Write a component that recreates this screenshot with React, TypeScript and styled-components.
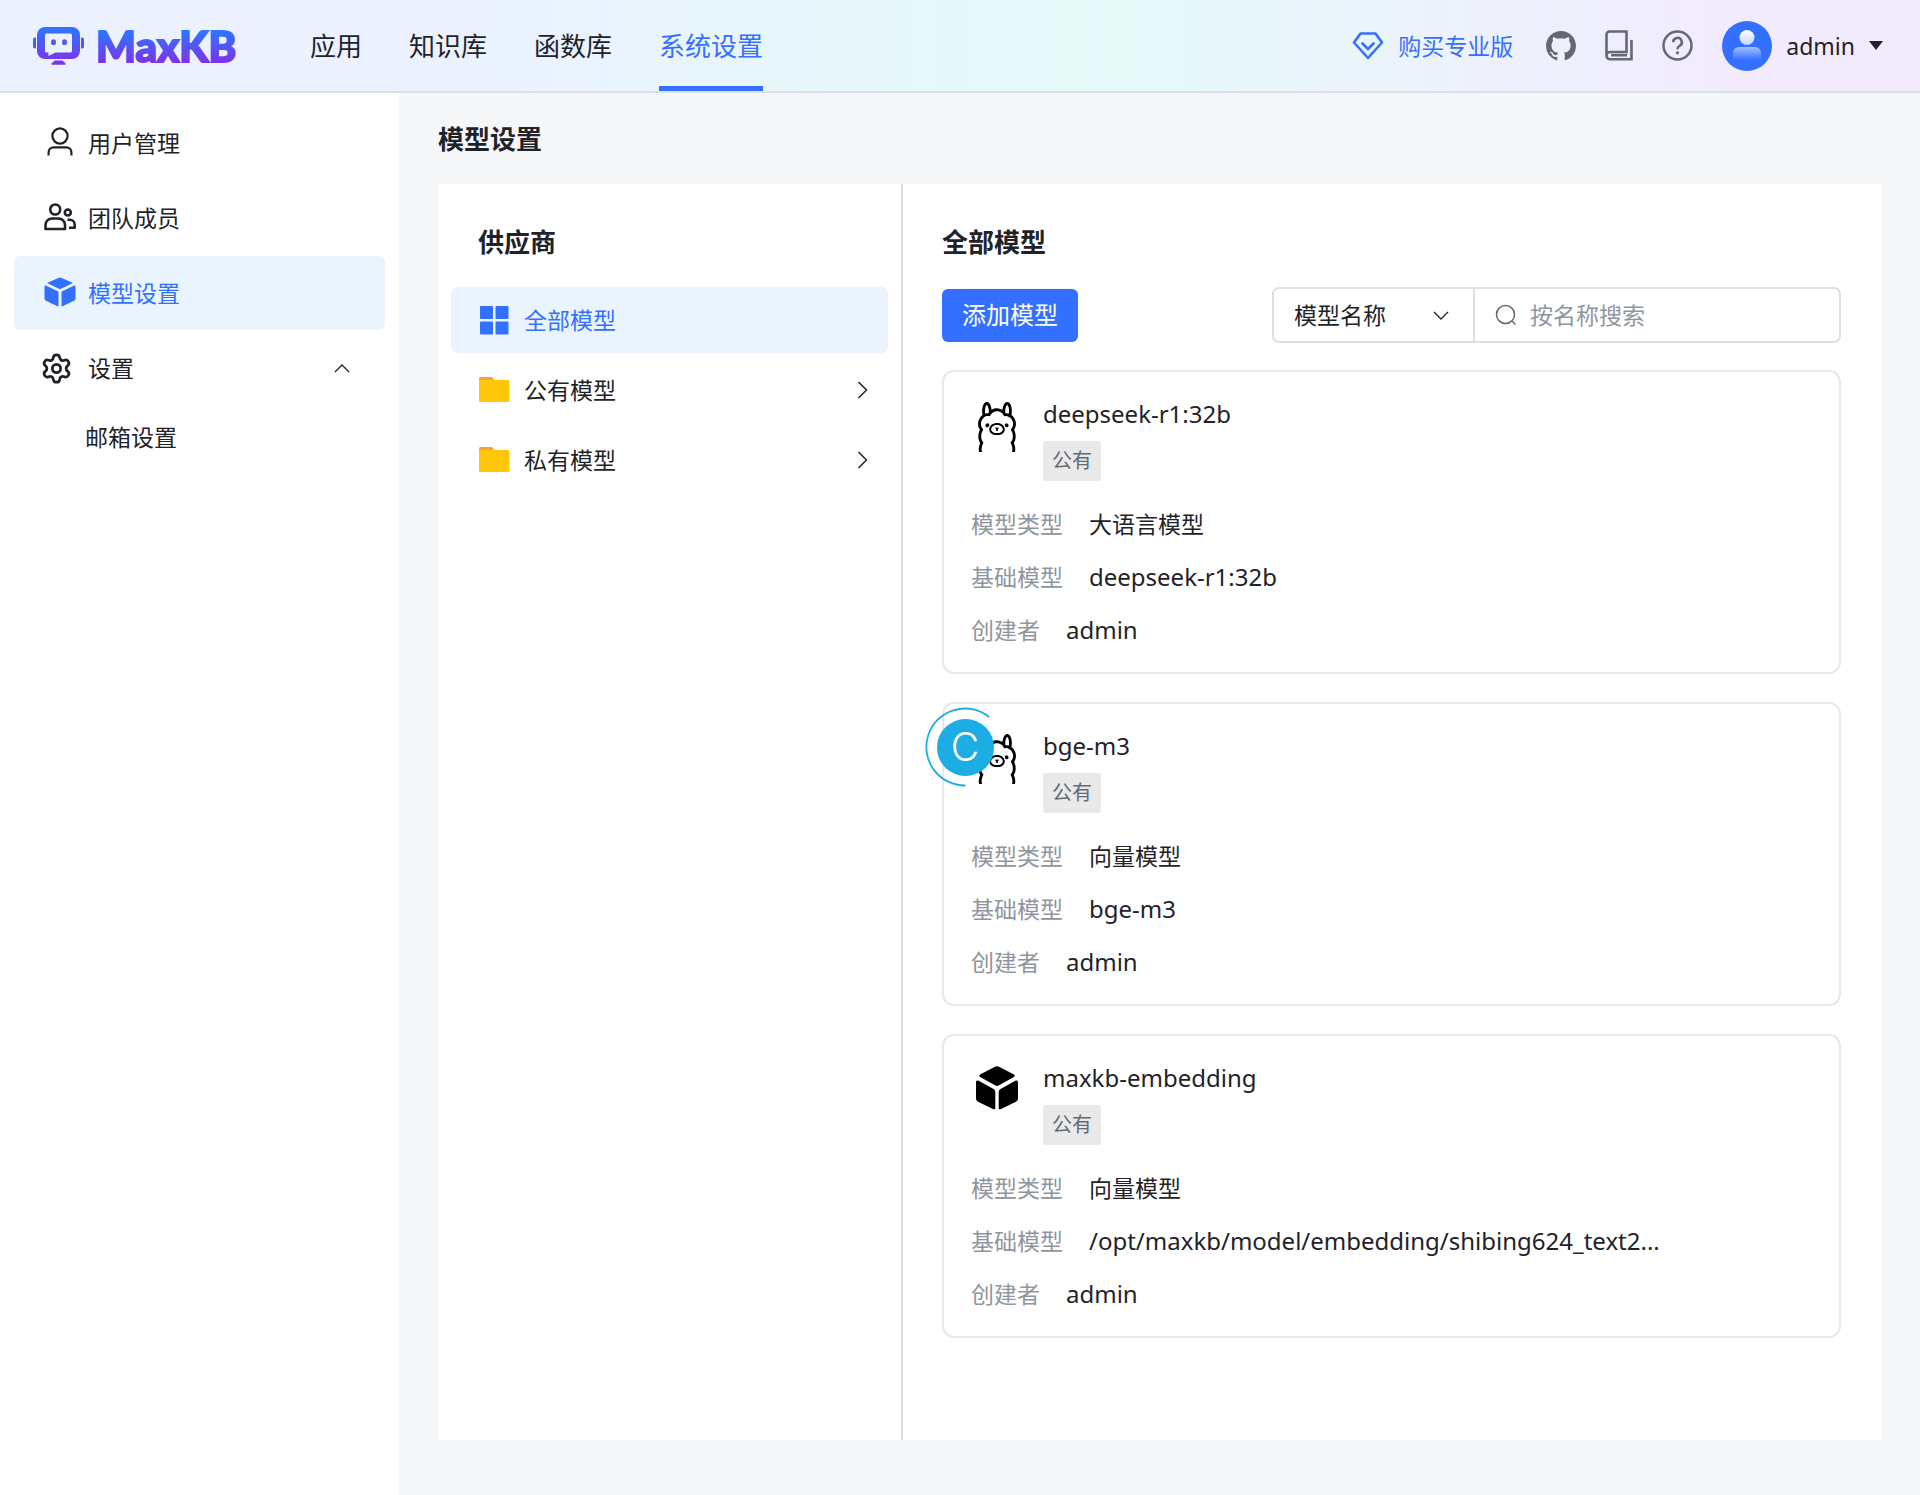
import React from 'react';
import styled, { createGlobalStyle, css } from 'styled-components';
import { Settings } from 'lucide-react';
import { SiOllama } from 'react-icons/si';

const color = {
  primary: '#3370ff',
  text: '#1f2329',
  muted: '#8f959e',
  icon: '#646a73',
  line: '#dcdfe3',
  page: '#f4f6f8',
  active: '#eaf4ff',
};

const GlobalStyle = createGlobalStyle`
  *, *::before, *::after { box-sizing: border-box; }
  body {
    margin: 0;
    background: ${color.page};
    color: ${color.text};
    font-family: 'Noto Sans', 'Noto Sans CJK SC', sans-serif;
    font-size: 23px;
    line-height: 32px;
  }
  a { color: inherit; text-decoration: none; }
  h1, h2, h3, p, ul, dl, dd { margin: 0; padding: 0; }
  ul { list-style: none; }
  button, input, select { font: inherit; color: inherit; }
  svg { display: block; flex: none; }
`;

const Page = styled.div`
  position: relative;
  min-height: 100vh;
  display: flex;
  flex-direction: column;
`;

const Header = styled.header`
  display: flex;
  align-items: stretch;
  height: 93px;
  padding: 0 37px 0 33px;
  border-bottom: 2px solid #dbdfe9;
  background: linear-gradient(90deg, #ebf1ff 24%, #e5fbf8 56%, #f2ebfe 90%);
`;

const Brand = styled.a`
  display: flex;
  align-items: center;
  gap: 12px;
  width: 277px;
`;

const BrandName = styled.span`
  font-family: Lato, sans-serif;
  font-weight: 900;
  font-size: 42px;
  line-height: 48px;
  background: linear-gradient(180deg, #2f74ff 20%, #7a35ea 82%);
  background-clip: text;
  -webkit-background-clip: text;
  -webkit-text-stroke: 2px transparent;
  color: transparent;
`;

const TopNav = styled.nav`
  display: flex;
  gap: 47px;
  flex: 1;
`;

const TopLink = styled.a<{ $active?: boolean }>`
  display: flex;
  align-items: center;
  font-size: 26px;
  border-top: 5px solid transparent;
  border-bottom: 5px solid ${(p) => (p.$active ? color.primary : 'transparent')};
  color: ${(p) => (p.$active ? color.primary : color.text)};
`;

const HeaderTools = styled.div`
  display: flex;
  align-items: center;
  gap: 29px;
  color: ${color.icon};
`;

const BuyLink = styled.a`
  display: flex;
  align-items: center;
  gap: 14px;
  margin-right: 4px;
  color: ${color.primary};
`;

const IconButton = styled.button`
  display: flex;
  padding: 0;
  border: 0;
  background: none;
  color: inherit;
`;

const UserButton = styled(IconButton)`
  align-items: center;
  gap: 14px;
  color: ${color.text};
`;

const Body = styled.div`
  flex: 1;
  display: flex;
`;

const Sidebar = styled.aside`
  flex: none;
  width: 399px;
  padding: 13px 14px;
  background: #fff;
`;

const SideList = styled.ul`
  display: flex;
  flex-direction: column;
  gap: 1px;
`;

const SideLink = styled.a<{ $active?: boolean }>`
  display: flex;
  align-items: center;
  height: 74px;
  padding: 0 35px 0 26px;
  border-radius: 6px;
  background: ${(p) => (p.$active ? color.active : 'transparent')};
  color: ${(p) => (p.$active ? color.primary : color.text)};
`;

const SideIcon = styled.span<{ $start?: boolean }>`
  display: flex;
  justify-content: ${(p) => (p.$start ? 'flex-start' : 'center')};
  width: 40px;
  margin-right: 8px;
`;

const SideText = styled.span`
  flex: 1;
`;

const SubLink = styled.a`
  display: flex;
  align-items: center;
  height: 64px;
  padding-left: 71px;
`;

const Main = styled.main`
  flex: 1;
  min-width: 0;
  display: flex;
  flex-direction: column;
  gap: 29px;
  padding: 30px 38px 55px 39px;
`;

const title = css`
  font-size: 26px;
  line-height: 32px;
  font-weight: 700;
`;

const PageTitle = styled.h1`
  ${title}
`;

const Panel = styled.div`
  flex: 1;
  display: flex;
  background: #fff;
`;

const Providers = styled.section`
  flex: none;
  width: 465px;
  padding: 42px 13px;
  border-right: 2px solid ${color.line};
`;

const ProviderTitle = styled.h2`
  ${title}
  padding-left: 27px;
  margin-bottom: 29px;
`;

const ProviderList = styled.ul`
  display: flex;
  flex-direction: column;
  gap: 4px;
`;

const ProviderButton = styled.button<{ $active?: boolean }>`
  display: flex;
  align-items: center;
  gap: 14px;
  width: 100%;
  height: 66px;
  padding: 0 20px 0 27px;
  border: 0;
  border-radius: 6px;
  text-align: left;
  background: ${(p) => (p.$active ? color.active : 'transparent')};
  color: ${(p) => (p.$active ? color.primary : color.text)};
`;

const ProviderName = styled.span`
  flex: 1;
`;

const Models = styled.section`
  flex: 1;
  min-width: 0;
  padding: 42px 41px 40px 39px;
`;

const ModelsTitle = styled.h2`
  ${title}
  margin-bottom: 29px;
`;

const Toolbar = styled.div`
  display: flex;
  align-items: center;
  justify-content: space-between;
  margin-bottom: 27px;
`;

const AddButton = styled.button`
  height: 53px;
  padding: 0 20px;
  border: 0;
  border-radius: 6px;
  background: ${color.primary};
  color: #fff;
  font-size: 24px;
`;

const Search = styled.form`
  display: flex;
  width: 569px;
  height: 56px;
  border: 2px solid ${color.line};
  border-radius: 7px;
`;

const SelectBox = styled.label`
  display: flex;
  align-items: center;
  width: 201px;
  border-right: 2px solid ${color.line};

  svg {
    margin-left: -40px;
    pointer-events: none;
  }
`;

const Select = styled.select`
  width: 100%;
  height: 100%;
  padding: 0 20px;
  border: 0;
  background: none;
  appearance: none;
`;

const SearchBox = styled.label`
  flex: 1;
  min-width: 0;
  display: flex;
  align-items: center;
  gap: 13px;
  padding: 0 20px;
`;

const SearchInput = styled.input`
  flex: 1;
  min-width: 0;
  padding: 0;
  border: 0;
  outline: 0;
  background: none;

  &::placeholder {
    color: ${color.muted};
    opacity: 1;
  }
`;

const CardList = styled.ul`
  display: flex;
  flex-direction: column;
  gap: 28px;
`;

const Card = styled.li`
  padding: 26px 27px;
  border: 2px solid #e6e8ea;
  border-radius: 12px;
`;

const CardHead = styled.div`
  display: flex;
  gap: 20px;
  margin-bottom: 27px;
`;

const CardLogo = styled.div`
  display: flex;
  justify-content: center;
  width: 52px;
  padding-top: 4px;
  color: #000;
`;

const CardName = styled.h3`
  font-size: 24px;
  line-height: 32px;
  font-weight: 400;
  margin-bottom: 11px;
`;

const Tag = styled.span`
  display: inline-flex;
  align-items: center;
  height: 40px;
  padding: 0 9px;
  border-radius: 3px;
  background: #e9e9ea;
  color: ${color.icon};
  font-size: 20px;
`;

const Facts = styled.dl`
  display: flex;
  flex-direction: column;
  gap: 21px;
`;

const Fact = styled.div`
  display: flex;
  gap: 26px;
`;

const FactLabel = styled.dt`
  flex: none;
  color: ${color.muted};
`;

const FactValue = styled.dd<{ $latin?: boolean }>`
  min-width: 0;
  overflow: hidden;
  text-overflow: ellipsis;
  white-space: nowrap;
  font-size: ${(p) => (p.$latin ? 24 : 23)}px;
`;

const Assistant = styled.button`
  position: absolute;
  left: 925px;
  top: 707px;
  display: grid;
  place-items: center;
  width: 80px;
  height: 80px;
  padding: 0;
  border: 0;
  background: none;

  > * {
    grid-area: 1 / 1;
  }
`;

const AssistantLetter = styled.span`
  display: grid;
  place-items: center;
  width: 57px;
  height: 57px;
  border-radius: 50%;
  background: #1bade4;
  color: #fff;
  font-family: Inter, sans-serif;
  font-weight: 300;
  font-size: 39px;
`;

const BotLogo = () => (
  <svg width="51" height="38" viewBox="0 0 51 38" aria-hidden="true">
    <defs>
      <linearGradient id="bot" x1="0" y1="0" x2="0" y2="38" gradientUnits="userSpaceOnUse">
        <stop offset="0.05" stopColor="#2f74ff" />
        <stop offset="0.9" stopColor="#7a35ea" />
      </linearGradient>
    </defs>
    <g fill="url(#bot)">
      <path
        fillRule="evenodd"
        d="M12 0h27a8 8 0 0 1 8 8v16a8 8 0 0 1-8 8H12a8 8 0 0 1-8-8V8a8 8 0 0 1 8-8Zm1.500 6.500a1.500 1.500 0 0 0-1.500 1.500v16a1.500 1.500 0 0 0 1.500 1.500h2v3.500l7-3.500h15a1.500 1.500 0 0 0 1.500-1.500V8a1.500 1.500 0 0 0-1.500-1.500Z"
      />
      <path d="M0 12.500A2 2 0 0 1 2 10.500h1v11H2a2 2 0 0 1-2-2ZM51 12.500a2 2 0 0 0-2-2h-1v11h1a2 2 0 0 0 2-2Z" />
      <ellipse cx="20.500" cy="15.200" rx="2.500" ry="2.900" />
      <ellipse cx="31.500" cy="15.200" rx="2.500" ry="2.900" />
      <path d="M21.500 33.500h8l2.800 2.800c.700.700.400 1.400-.500 1.400H19.300c-.900 0-1.200-.700-.500-1.400Z" />
    </g>
  </svg>
);

const Diamond = () => (
  <svg width="32" height="32" viewBox="0 0 32 32" fill="none" stroke="currentColor" strokeWidth="2.600" strokeLinejoin="round" strokeLinecap="round" aria-hidden="true">
    <path d="M8.500 3.500h15l6.500 9L16 28 2 12.500Z" />
    <path d="m10.500 13.500 5.500 5.500 5.500-5.500" />
  </svg>
);

const Github = () => (
  <svg width="30" height="30" viewBox="0 0 16 16" fill="currentColor" aria-hidden="true">
    <path d="M8 0c4.42 0 8 3.58 8 8a8.013 8.013 0 0 1-5.45 7.59c-.4.08-.55-.17-.55-.38 0-.27.01-1.13.01-2.2 0-.75-.25-1.23-.54-1.48 1.78-.2 3.65-.88 3.65-3.95 0-.88-.31-1.59-.82-2.15.08-.2.36-1.02-.08-2.12 0 0-.67-.22-2.2.82-.64-.18-1.32-.27-2-.27-.68 0-1.36.09-2 .27-1.53-1.03-2.2-.82-2.2-.82-.44 1.1-.16 1.92-.08 2.12-.51.56-.82 1.28-.82 2.15 0 3.06 1.86 3.75 3.64 3.95-.23.2-.44.55-.51 1.07-.46.21-1.61.55-2.33-.66-.15-.24-.6-.83-1.23-.82-.67.01-.27.38.01.53.34.19.73.9.82 1.13.16.45.68 1.31 2.69.94 0 .67.01 1.3.01 1.49 0 .21-.15.45-.55.38A7.995 7.995 0 0 1 0 8c0-4.42 3.58-8 8-8Z" />
  </svg>
);

const Book = () => (
  <svg width="28" height="31" viewBox="0 0 28 31" fill="none" stroke="currentColor" strokeWidth="2.600" aria-hidden="true">
    <path d="M1.500 25V4.500a3 3 0 0 1 3-3h17v20.500H5A3.500 3.500 0 0 0 1.500 25.500 3.500 3.500 0 0 0 5 29.200h21.500V10" />
    <path d="M6 25.200h16" />
  </svg>
);

const Help = () => (
  <svg width="31" height="31" viewBox="0 0 31 31" fill="none" stroke="currentColor" strokeWidth="2.500" aria-hidden="true">
    <circle cx="15.500" cy="15.500" r="14" />
    <path d="M11.200 12.200a4.300 4.300 0 1 1 6.300 3.800c-1.300.700-2 1.500-2 3v.300" />
    <circle cx="15.500" cy="22.800" r="1.600" fill="currentColor" stroke="none" />
  </svg>
);

const Avatar = () => (
  <svg width="50" height="50" viewBox="0 0 50 50" aria-hidden="true">
    <defs>
      <linearGradient id="face" x1="0" y1="0" x2="0" y2="1">
        <stop offset="0" stopColor="#fff" />
        <stop offset="1" stopColor="#c3d6ff" />
      </linearGradient>
      <linearGradient id="bust" x1="0" y1="0" x2="0" y2="1">
        <stop offset="0" stopColor="#a3c0ff" />
        <stop offset="1" stopColor="#3370ff" />
      </linearGradient>
    </defs>
    <circle cx="25" cy="25" r="25" fill="#3370ff" />
    <circle cx="25" cy="16.500" r="7.500" fill="url(#face)" />
    <path d="M11 39v-7a6 6 0 0 1 6-6h16a6 6 0 0 1 6 6v7Z" fill="url(#bust)" />
  </svg>
);

const Caret = () => (
  <svg width="14" height="9" viewBox="0 0 14 9" fill="currentColor" aria-hidden="true">
    <path d="M0 0h14L7 9Z" />
  </svg>
);

const UserIcon = () => (
  <svg width="32" height="32" viewBox="0 0 32 32" fill="none" stroke="currentColor" strokeWidth="2.200" aria-hidden="true">
    <circle cx="16" cy="9" r="7.600" />
    <path d="M4.600 28.500v-3.200a5 5 0 0 1 5-5h12.800a5 5 0 0 1 5 5v3.200" />
  </svg>
);

const TeamIcon = () => (
  <svg width="32" height="32" viewBox="0 0 32 32" fill="none" stroke="currentColor" strokeWidth="2.600" strokeLinejoin="round" aria-hidden="true">
    <circle cx="11.200" cy="7.500" r="5" />
    <path d="M1.500 27v-4a6.500 6.500 0 0 1 6.500-6.500h6.500a6.500 6.500 0 0 1 6.500 6.500v4Z" />
    <circle cx="23.800" cy="10.500" r="3" />
    <path d="M23.500 17.700h2.200a5 5 0 0 1 5 5v3H25" />
  </svg>
);

const CubeIcon = () => (
  <svg width="32" height="32" viewBox="0 0 32 32" fill="currentColor" aria-hidden="true">
    <path d="M15 .800a2.500 2.500 0 0 1 2 0l11 4.600c.700.300.700.900 0 1.200l-11 5.200a2.500 2.500 0 0 1-2 0L4 6.600c-.700-.300-.700-.900 0-1.200ZM.500 9.200c0-.700.500-1 1.200-.700l12.100 5.800c.500.200.700.600.700 1.200v13.200c0 .700-.500.900-1.100.600L2 23.800c-1-.500-1.500-1.200-1.500-2.200ZM31.500 9.200c0-.700-.500-1-1.200-.700l-12.100 5.800c-.500.200-.700.600-.700 1.200v13.200c0 .700.500.900 1.100.600L30 23.800c1-.500 1.500-1.200 1.500-2.200Z" />
  </svg>
);

const BlockIcon = () => (
  <svg width="42" height="44" viewBox="0 0 42 44" fill="currentColor" aria-hidden="true">
    <path d="M19 .800a4 4 0 0 1 4 0l14.500 7.500c1.700.900 1.700 2 0 3L23 19.300a4 4 0 0 1-4 0L4.500 11.300c-1.700-1-1.700-2.100 0-3ZM0 16.500c0-2 1-2.600 2.700-1.700l14.800 8.100c1.200.700 1.800 1.500 1.800 2.800v16c0 1.600-1 2-2.300 1.300L2.500 36C.800 35.100 0 34 0 32.300ZM42 16.500c0-2-1-2.600-2.700-1.700l-14.800 8.100c-1.200.700-1.800 1.500-1.800 2.800v16c0 1.600 1 2 2.300 1.300L39.500 36c1.700-.900 2.500-2 2.500-3.700Z" />
  </svg>
);

const GridIcon = () => (
  <svg width="32" height="32" viewBox="0 0 32 32" fill="currentColor" aria-hidden="true">
    <rect x="2" y="2" width="13" height="13" rx="1" />
    <rect x="17.500" y="2" width="13" height="13" rx="1" />
    <rect x="2" y="17.500" width="13" height="13" rx="1" />
    <rect x="17.500" y="17.500" width="13" height="13" rx="1" />
  </svg>
);

const FolderIcon = () => (
  <svg width="32" height="32" viewBox="0 0 32 32" aria-hidden="true">
    <path d="M1 4.500A1.500 1.500 0 0 1 2.500 3h11.500l2 2.500v6H1Z" fill="#f7a23c" />
    <path d="M1 6h29a1.500 1.500 0 0 1 1.500 1.500V26.500a1.500 1.500 0 0 1-1.500 1.500H2.500A1.500 1.500 0 0 1 1 26.500Z" fill="#ffc60a" />
  </svg>
);

const turn = { up: 'm1 9 7-7 7 7', down: 'm1 2 7 7 7-7' };

const Chevron = ({ to }: { to: 'up' | 'down' }) => (
  <svg width="16" height="11" viewBox="0 0 16 11" fill="none" stroke="currentColor" strokeWidth="1.300" aria-hidden="true">
    <path d={turn[to]} />
  </svg>
);

const ChevronRight = () => (
  <svg width="11" height="18" viewBox="0 0 11 18" fill="none" stroke="currentColor" strokeWidth="1.500" aria-hidden="true">
    <path d="m1.500 1 8 8-8 8" />
  </svg>
);

const SearchIcon = () => (
  <svg width="22" height="22" viewBox="0 0 22 22" fill="none" stroke={color.icon} strokeWidth="1.500" aria-hidden="true">
    <circle cx="10.500" cy="10.500" r="9" />
    <path d="m17 17 3.500 3.500" />
  </svg>
);

const AssistantRing = () => (
  <svg width="80" height="80" viewBox="0 0 80 80" fill="none" stroke="#1bade4" strokeWidth="1.800" aria-hidden="true">
    <path d="M40.500 78.500A38.500 38.500 0 1 1 64 10" />
  </svg>
);

type Model = { name: string; logo: 'ollama' | 'local'; kind: string; base: string; owner: string };

const models: Model[] = [
  { name: 'deepseek-r1:32b', logo: 'ollama', kind: '大语言模型', base: 'deepseek-r1:32b', owner: 'admin' },
  { name: 'bge-m3', logo: 'ollama', kind: '向量模型', base: 'bge-m3', owner: 'admin' },
  { name: 'maxkb-embedding', logo: 'local', kind: '向量模型', base: '/opt/maxkb/model/embedding/shibing624_text2...', owner: 'admin' },
];

const ModelCard = ({ model }: { model: Model }) => (
  <Card>
    <CardHead>
      <CardLogo>{model.logo === 'ollama' ? <SiOllama size={50} /> : <BlockIcon />}</CardLogo>
      <div>
        <CardName>{model.name}</CardName>
        <Tag>公有</Tag>
      </div>
    </CardHead>
    <Facts>
      <Fact>
        <FactLabel>模型类型</FactLabel>
        <FactValue>{model.kind}</FactValue>
      </Fact>
      <Fact>
        <FactLabel>基础模型</FactLabel>
        <FactValue $latin>{model.base}</FactValue>
      </Fact>
      <Fact>
        <FactLabel>创建者</FactLabel>
        <FactValue $latin>{model.owner}</FactValue>
      </Fact>
    </Facts>
  </Card>
);

export default function App() {
  return (
    <>
      <GlobalStyle />
      <Page>
        <Header>
          <Brand href="#">
            <BotLogo />
            <BrandName>MaxKB</BrandName>
          </Brand>
          <TopNav>
            <TopLink href="#">应用</TopLink>
            <TopLink href="#">知识库</TopLink>
            <TopLink href="#">函数库</TopLink>
            <TopLink href="#" $active>系统设置</TopLink>
          </TopNav>
          <HeaderTools>
            <BuyLink href="#">
              <Diamond />
              购买专业版
            </BuyLink>
            <IconButton type="button" aria-label="GitHub"><Github /></IconButton>
            <IconButton type="button" aria-label="文档"><Book /></IconButton>
            <IconButton type="button" aria-label="帮助"><Help /></IconButton>
            <UserButton type="button">
              <Avatar />
              admin
              <Caret />
            </UserButton>
          </HeaderTools>
        </Header>
        <Body>
          <Sidebar>
            <SideList>
              <li>
                <SideLink href="#">
                  <SideIcon><UserIcon /></SideIcon>
                  <SideText>用户管理</SideText>
                </SideLink>
              </li>
              <li>
                <SideLink href="#">
                  <SideIcon><TeamIcon /></SideIcon>
                  <SideText>团队成员</SideText>
                </SideLink>
              </li>
              <li>
                <SideLink href="#" $active>
                  <SideIcon><CubeIcon /></SideIcon>
                  <SideText>模型设置</SideText>
                </SideLink>
              </li>
              <li>
                <SideLink href="#">
                  <SideIcon $start><Settings size={33} strokeWidth={2} /></SideIcon>
                  <SideText>设置</SideText>
                  <Chevron to="up" />
                </SideLink>
                <SubLink href="#">邮箱设置</SubLink>
              </li>
            </SideList>
          </Sidebar>
          <Main>
            <PageTitle>模型设置</PageTitle>
            <Panel>
              <Providers>
                <ProviderTitle>供应商</ProviderTitle>
                <ProviderList>
                  <li>
                    <ProviderButton type="button" $active>
                      <GridIcon />
                      <ProviderName>全部模型</ProviderName>
                    </ProviderButton>
                  </li>
                  <li>
                    <ProviderButton type="button">
                      <FolderIcon />
                      <ProviderName>公有模型</ProviderName>
                      <ChevronRight />
                    </ProviderButton>
                  </li>
                  <li>
                    <ProviderButton type="button">
                      <FolderIcon />
                      <ProviderName>私有模型</ProviderName>
                      <ChevronRight />
                    </ProviderButton>
                  </li>
                </ProviderList>
              </Providers>
              <Models>
                <ModelsTitle>全部模型</ModelsTitle>
                <Toolbar>
                  <AddButton type="button">添加模型</AddButton>
                  <Search>
                    <SelectBox>
                      <Select aria-label="搜索字段" defaultValue="name">
                        <option value="name">模型名称</option>
                      </Select>
                      <Chevron to="down" />
                    </SelectBox>
                    <SearchBox>
                      <SearchIcon />
                      <SearchInput type="text" aria-label="按名称搜索" placeholder="按名称搜索" />
                    </SearchBox>
                  </Search>
                </Toolbar>
                <CardList>
                  {models.map((model) => (
                    <ModelCard key={model.name} model={model} />
                  ))}
                </CardList>
              </Models>
            </Panel>
          </Main>
        </Body>
        <Assistant type="button" aria-label="助手">
          <AssistantRing />
          <AssistantLetter>C</AssistantLetter>
        </Assistant>
      </Page>
    </>
  );
}
